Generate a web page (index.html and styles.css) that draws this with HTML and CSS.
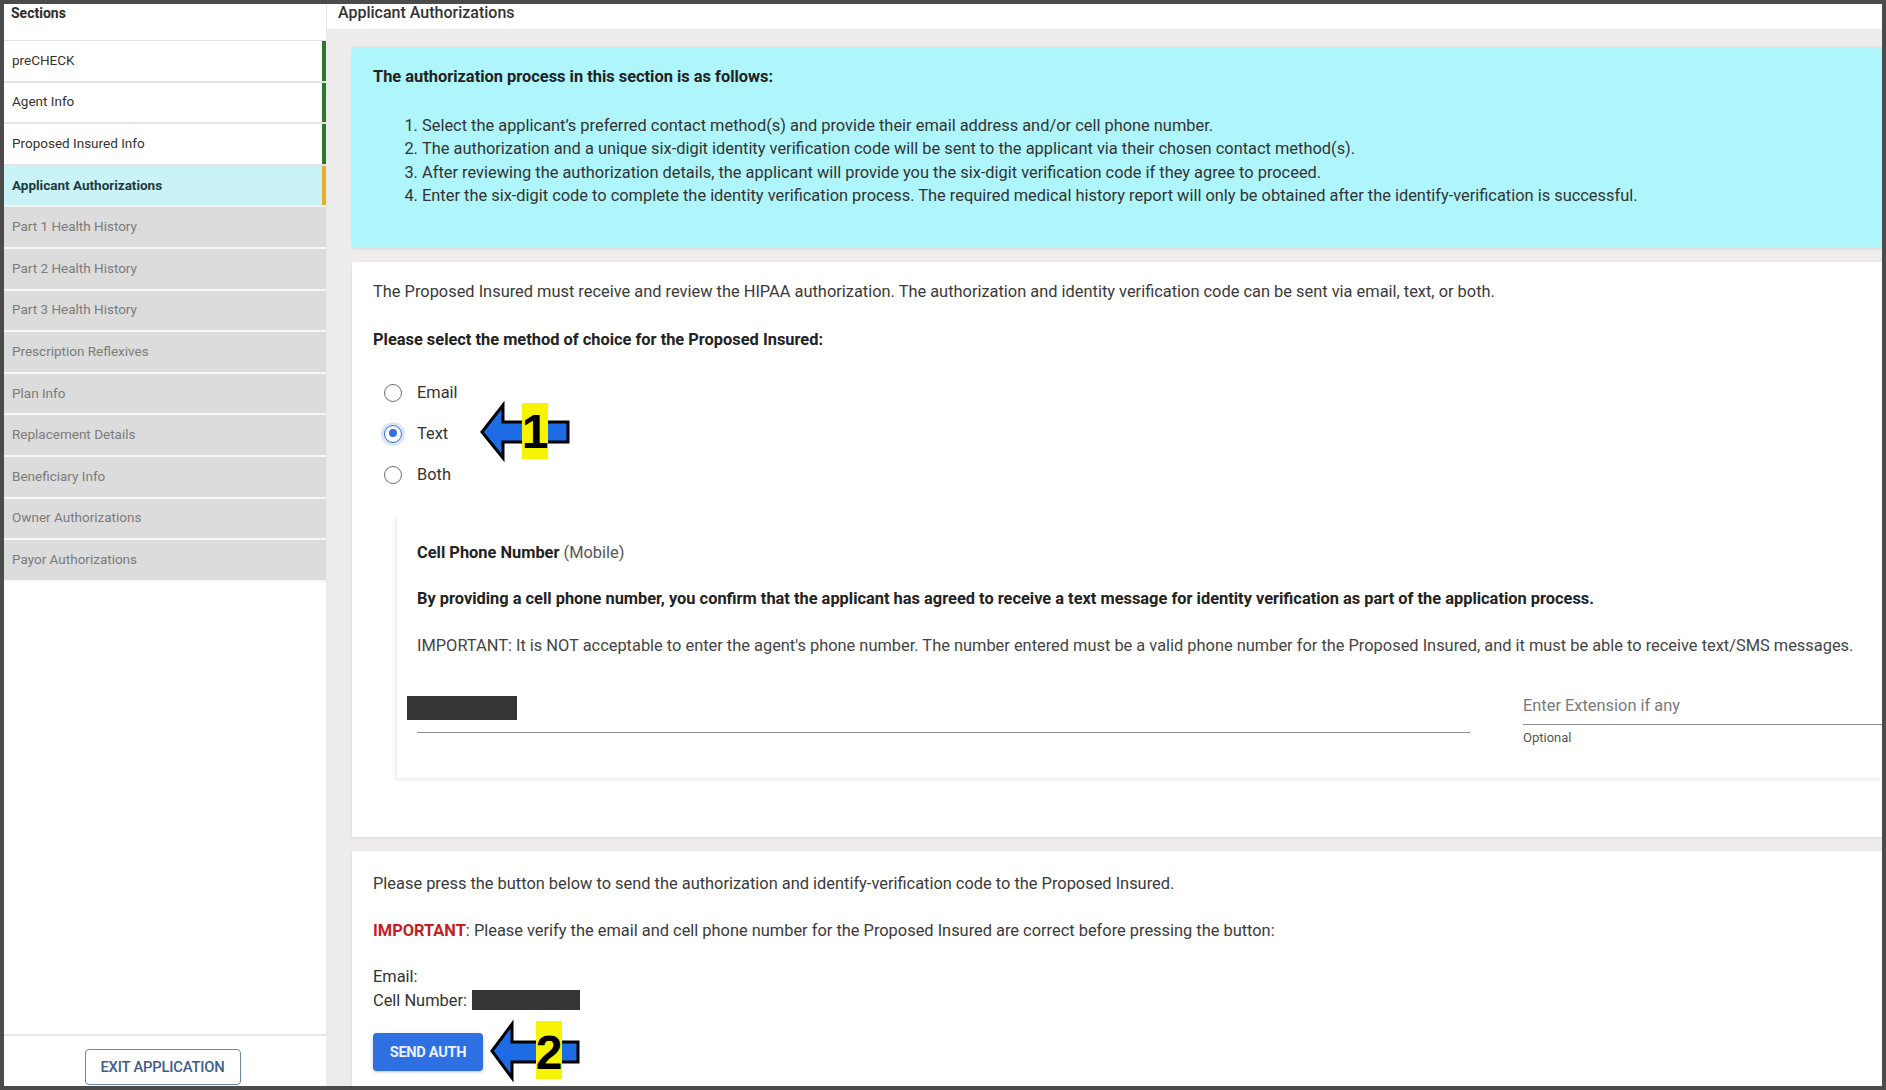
FILE: index.html
```html
<!DOCTYPE html>
<html lang="en">
<head>
<meta charset="utf-8">
<title>Applicant Authorizations</title>
<link rel="stylesheet" href="styles.css">
</head>
<body>
<div class="app">
  <aside class="sidebar">
    <div class="side-head">Sections</div>
    <nav class="nav">
      <div class="nav-item done">preCHECK</div>
      <div class="nav-item done">Agent Info</div>
      <div class="nav-item done">Proposed Insured Info</div>
      <div class="nav-item active">Applicant Authorizations</div>
      <div class="nav-item locked">Part 1 Health History</div>
      <div class="nav-item locked">Part 2 Health History</div>
      <div class="nav-item locked">Part 3 Health History</div>
      <div class="nav-item locked">Prescription Reflexives</div>
      <div class="nav-item locked">Plan Info</div>
      <div class="nav-item locked">Replacement Details</div>
      <div class="nav-item locked">Beneficiary Info</div>
      <div class="nav-item locked">Owner Authorizations</div>
      <div class="nav-item locked">Payor Authorizations</div>
    </nav>
    <div class="side-fill"></div>
    <div class="side-foot">
      <button class="exit-btn">EXIT APPLICATION</button>
    </div>
  </aside>

  <main class="main">
    <header class="main-head">Applicant Authorizations</header>
    <div class="content">
      <section class="card info">
        <p class="strong">The authorization process in this section is as follows:</p>
        <ol class="steps">
          <li>Select the applicant’s preferred contact method(s) and provide their email address and/or cell phone number.</li>
          <li>The authorization and a unique six-digit identity verification code will be sent to the applicant via their chosen contact method(s).</li>
          <li>After reviewing the authorization details, the applicant will provide you the six-digit verification code if they agree to proceed.</li>
          <li>Enter the six-digit code to complete the identity verification process. The required medical history report will only be obtained after the identify-verification is successful.</li>
        </ol>
      </section>

      <section class="card method">
        <p class="para">The Proposed Insured must receive and review the HIPAA authorization. The authorization and identity verification code can be sent via email, text, or both.</p>
        <p class="strong question">Please select the method of choice for the Proposed Insured:</p>
        <div class="radios">
          <div class="radio-row"><span class="radio"></span><span class="radio-label">Email</span></div>
          <div class="radio-row"><span class="radio checked"></span><span class="radio-label">Text</span>
            <svg class="callout callout-1" viewBox="0 0 90 56" width="90" height="56">
              <polygon points="2,29 23,2 23,19 88,19 88,39 23,39 23,55" fill="#1d6ce6" stroke="#000" stroke-width="3" stroke-linejoin="miter"/>
              <rect x="42" y="0" width="26" height="56" fill="#f6f400"/>
              <text x="55" y="45" text-anchor="middle" class="callout-num">1</text>
            </svg>
          </div>
          <div class="radio-row"><span class="radio"></span><span class="radio-label">Both</span></div>
        </div>

        <div class="phone-card">
          <p class="phone-title"><b>Cell Phone Number</b> <span class="muted">(Mobile)</span></p>
          <p class="strong consent">By providing a cell phone number, you confirm that the applicant has agreed to receive a text message for identity verification as part of the application process.</p>
          <p class="para warn">IMPORTANT: It is NOT acceptable to enter the agent's phone number. The number entered must be a valid phone number for the Proposed Insured, and it must be able to receive text/SMS messages.</p>
          <div class="fields">
            <div class="phone-field"><span class="redact redact-phone"></span></div>
            <div class="ext-field">
              <div class="ext-input">Enter Extension if any</div>
              <div class="ext-hint">Optional</div>
            </div>
          </div>
        </div>
      </section>

      <section class="card send">
        <p class="para">Please press the button below to send the authorization and identify-verification code to the Proposed Insured.</p>
        <p class="para"><span class="important">IMPORTANT</span>: Please verify the email and cell phone number for the Proposed Insured are correct before pressing the button:</p>
        <div class="summary">
          <div>Email:</div>
          <div>Cell Number: <span class="redact redact-cell"></span></div>
        </div>
        <div class="send-row">
          <button class="send-btn">SEND AUTH</button>
          <svg class="callout callout-2" viewBox="0 0 90 58" width="90" height="58">
            <polygon points="2,30 22,3 22,21 88,21 88,41 22,41 22,57" fill="#1d6ce6" stroke="#000" stroke-width="3" stroke-linejoin="miter"/>
            <rect x="46" y="0" width="26" height="58" fill="#f6f400"/>
            <text x="59" y="48" text-anchor="middle" class="callout-num">2</text>
          </svg>
        </div>
      </section>
    </div>
  </main>
</div>
</body>
</html>
```

FILE: styles.css
```css
* { box-sizing: border-box; }

html, body {
  margin: 0;
  padding: 0;
  height: 100%;
}

body {
  background: #4b4b4b;
  padding: 4px;
  font-family: Roboto, "Liberation Sans", Arial, sans-serif;
  color: #333;
  overflow: hidden;
}

.app {
  display: flex;
  height: 1082px;
  overflow: hidden;
  background: #fff;
}

/* ---------- Sidebar ---------- */
.sidebar {
  width: 322px;
  flex: none;
  display: flex;
  flex-direction: column;
  background: #fff;
}

.side-head {
  height: 37px;
  padding: 1px 0 0 7px;
  font-size: 14px;
  line-height: 16px;
  font-weight: 700;
  color: #2b2b2b;
  border-bottom: 1px solid #e2e2e2;
}

.nav-item {
  height: 41.6px;
  display: flex;
  align-items: center;
  padding: 0 0 2px 8px;
  font-size: 13.5px;
  border-bottom: 2px solid #e4e4e4;
}

.nav-item.done {
  background: #fff;
  color: #333;
  box-shadow: inset -4px 0 0 #2a7a2a;
}

.nav-item.active {
  background: #c9f3f7;
  color: #1d3a40;
  font-weight: 700;
  border-bottom-color: #f4f4f4;
  box-shadow: inset -4px 0 0 #e9ad2c;
}

.nav-item.locked {
  background: #dcdcdc;
  color: #7b7b7b;
  border-bottom-color: #f6f6f6;
}

.side-fill { flex: 1; }

.side-foot {
  height: 52px;
  border-top: 2px solid #e7e7e7;
  padding-top: 13px;
  display: flex;
  justify-content: center;
}

.exit-btn {
  width: 156px;
  height: 36px;
  flex: none;
  background: #fff;
  border: 1.5px solid #6e86a4;
  border-radius: 4px;
  color: #3f5c8c;
  font-family: Roboto, "Liberation Sans", Arial, sans-serif;
  font-size: 14.8px;
  font-weight: 500;
  letter-spacing: -0.2px;
  margin-right: 5px;
}

/* ---------- Main ---------- */
.main {
  flex: 1;
  min-width: 0;
  display: flex;
  flex-direction: column;
  background: #eeedec;
  border-left: 1px solid #e6e6e6;
}

.main-head {
  height: 25px;
  flex: none;
  background: #fff;
  padding: 0 0 0 11px;
  font-size: 16px;
  line-height: 18px;
  font-weight: 500;
  color: #333;
}

.content {
  padding: 18px 0 0 25px;
  display: flex;
  flex-direction: column;
  gap: 14px;
}

.card {
  background: #fff;
  padding: 20px 0 0 21px;
  box-shadow: 0 1px 3px rgba(0,0,0,0.10);
}

p { margin: 0; }

.para, .strong {
  font-size: 16.4px;
  line-height: 20px;
  color: #3a3a3a;
}

.strong { font-weight: 700; color: #222; }

/* info card */
.info {
  background: #aef6fb;
  height: 201px;
}

.steps {
  margin: 27px 0 0;
  padding-left: 49px;
  font-size: 16.4px;
  line-height: 23.3px;
  color: #333;
}

/* method card */
.method { padding-bottom: 59px; }
.method .para { margin-bottom: 28px; }

.radios {
  margin-top: 22px;
  padding-left: 11px;
}

.radio-row {
  position: relative;
  height: 41px;
  display: flex;
  align-items: center;
}

.radio {
  width: 18px;
  height: 18px;
  border-radius: 50%;
  border: 1.5px solid #6f6f6f;
  background: #fff;
  flex: none;
  position: relative;
}

.radio.checked {
  border-color: #3a6fd8;
  box-shadow: 0 0 0 3px rgba(58,111,216,0.18);
}

.radio.checked::after {
  content: "";
  position: absolute;
  left: 3.5px;
  top: 3.5px;
  width: 8px;
  height: 8px;
  border-radius: 50%;
  background: #3a6fd8;
}

.radio-label {
  margin-left: 15px;
  font-size: 16.4px;
  color: #333;
}

.callout {
  position: absolute;
  left: 96px;
  top: -10px;
  overflow: visible;
}

.callout-num {
  font-family: "Liberation Sans", Arial, sans-serif;
  font-weight: 700;
  font-size: 48px;
  fill: #000;
}

.phone-card {
  margin: 21px 0 0 24px;
  padding: 27px 0 33px 20px;
  background: #fff;
  box-shadow: -2px 2px 4px rgba(0,0,0,0.08);
}

.phone-title {
  font-size: 16.4px;
  line-height: 20px;
  color: #222;
}

.muted { color: #555; }

.consent { margin-top: 26px; }
.warn { margin-top: 27px; color: #444; }

.fields {
  margin-top: 32px;
  display: flex;
  align-items: flex-start;
  gap: 53px;
}

.phone-field {
  width: 1053px;
  flex: none;
  height: 45px;
  padding-top: 8px;
  border-bottom: 1.5px solid #8c8c8c;
}

.redact {
  display: inline-block;
  background: #363636;
  vertical-align: middle;
}

.redact-phone {
  width: 110px;
  height: 24px;
  margin-left: -10px;
}

.ext-field { flex: 1; }

.ext-input {
  height: 37px;
  padding-top: 8px;
  font-size: 16.4px;
  line-height: 20px;
  color: #7a7a7a;
  border-bottom: 1.5px solid #8c8c8c;
}

.ext-hint {
  margin-top: 6px;
  font-size: 13px;
  line-height: 14px;
  color: #555;
}

/* send card */
.send {
  padding-top: 23px;
  flex: 1;
  min-height: 240px;
}

.send .para { margin-bottom: 27px; }

.important { color: #c41d25; font-weight: 700; }

.summary {
  font-size: 16.4px;
  line-height: 24px;
  color: #333;
  margin-top: -3px;
}

.redact-cell {
  width: 108px;
  height: 20px;
  margin-left: 1px;
  margin-top: -3px;
}

.send-row {
  position: relative;
  margin-top: 20px;
  height: 38px;
}

.send-btn {
  width: 110px;
  height: 38px;
  border: none;
  border-radius: 4px;
  background: #2e6fe2;
  color: #eaf2ff;
  font-family: Roboto, "Liberation Sans", Arial, sans-serif;
  font-size: 14.6px;
  font-weight: 700;
  letter-spacing: -0.3px;
  box-shadow: 0 1px 3px rgba(0,0,0,0.25);
}

.callout-2 {
  left: 117px;
  top: -12px;
}
```
